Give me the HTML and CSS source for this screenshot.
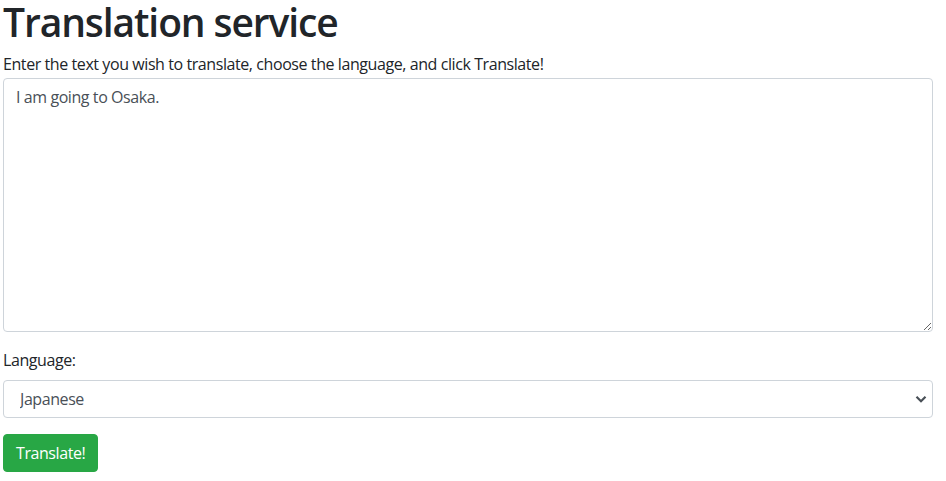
FILE: index.html
```html
<!DOCTYPE html>
<html lang="en">
<head>
<meta charset="utf-8">
<title>Translation service</title>
<link rel="stylesheet" href="styles.css">
</head>
<body>
<div class="container">
  <h1 class="title">Translation service</h1>
  <form class="form">
    <div class="form-group">
      <label class="label" for="text">Enter the text you wish to translate, choose the language, and click Translate!</label>
      <textarea id="text" class="control textarea" rows="10">I am going to Osaka.</textarea>
    </div>
    <div class="form-group">
      <label class="label" for="lang">Language:</label>
      <div class="select-wrap">
        <select id="lang" class="control select">
          <option>Japanese</option>
        </select>
        <svg class="chevron" width="12" height="8" viewBox="0 0 12 8" aria-hidden="true"><path d="M1.5 1.8 L6 6.2 L10.5 1.8" fill="none" stroke="#495057" stroke-width="2.2"/></svg>
      </div>
    </div>
    <button type="button" class="btn">Translate!</button>
  </form>
</div>
</body>
</html>
```
FILE: styles.css
```css
* { box-sizing: border-box; }
html, body { margin: 0; padding: 0; background: #fff; }
body {
  font-family: "Open Sans", "Noto Sans", sans-serif;
  font-size: 16px;
  line-height: 1.5;
  color: #212529;
  letter-spacing: -0.42px;
}
.container {
  width: 933px;
  padding-left: 3px;
}
.title {
  font-size: 39px;
  font-weight: 600;
  line-height: 43px;
  letter-spacing: -1.1px;
  margin: 0 0 9px;
}
.form-group { margin-bottom: 16px; }
.label {
  display: block;
  margin-bottom: 0;
}
.form-group + .form-group .label { margin-bottom: 8px; }
.control {
  display: block;
  width: 100%;
  font-family: inherit;
  font-size: 16px;
  line-height: 1.5;
  letter-spacing: -0.42px;
  color: #495057;
  background: #fff;
  border: 1px solid #ced4da;
  border-radius: 4px;
  padding: 6px 12px;
  margin: 0;
}
.textarea {
  height: 254px;
  margin-top: 2px;
  resize: vertical;
}
.select-wrap { position: relative; }
.select {
  height: 38px;
  appearance: none;
  -webkit-appearance: none;
  padding-left: 16px;
}
.chevron {
  position: absolute;
  right: 6px;
  top: 15px;
  pointer-events: none;
}
.btn {
  display: inline-block;
  font-family: inherit;
  font-size: 16px;
  line-height: 1.5;
  letter-spacing: -0.42px;
  color: #fff;
  background: #28a745;
  border: 1px solid #28a745;
  border-radius: 4px;
  padding: 6px 12px;
  height: 38px;
}
```
